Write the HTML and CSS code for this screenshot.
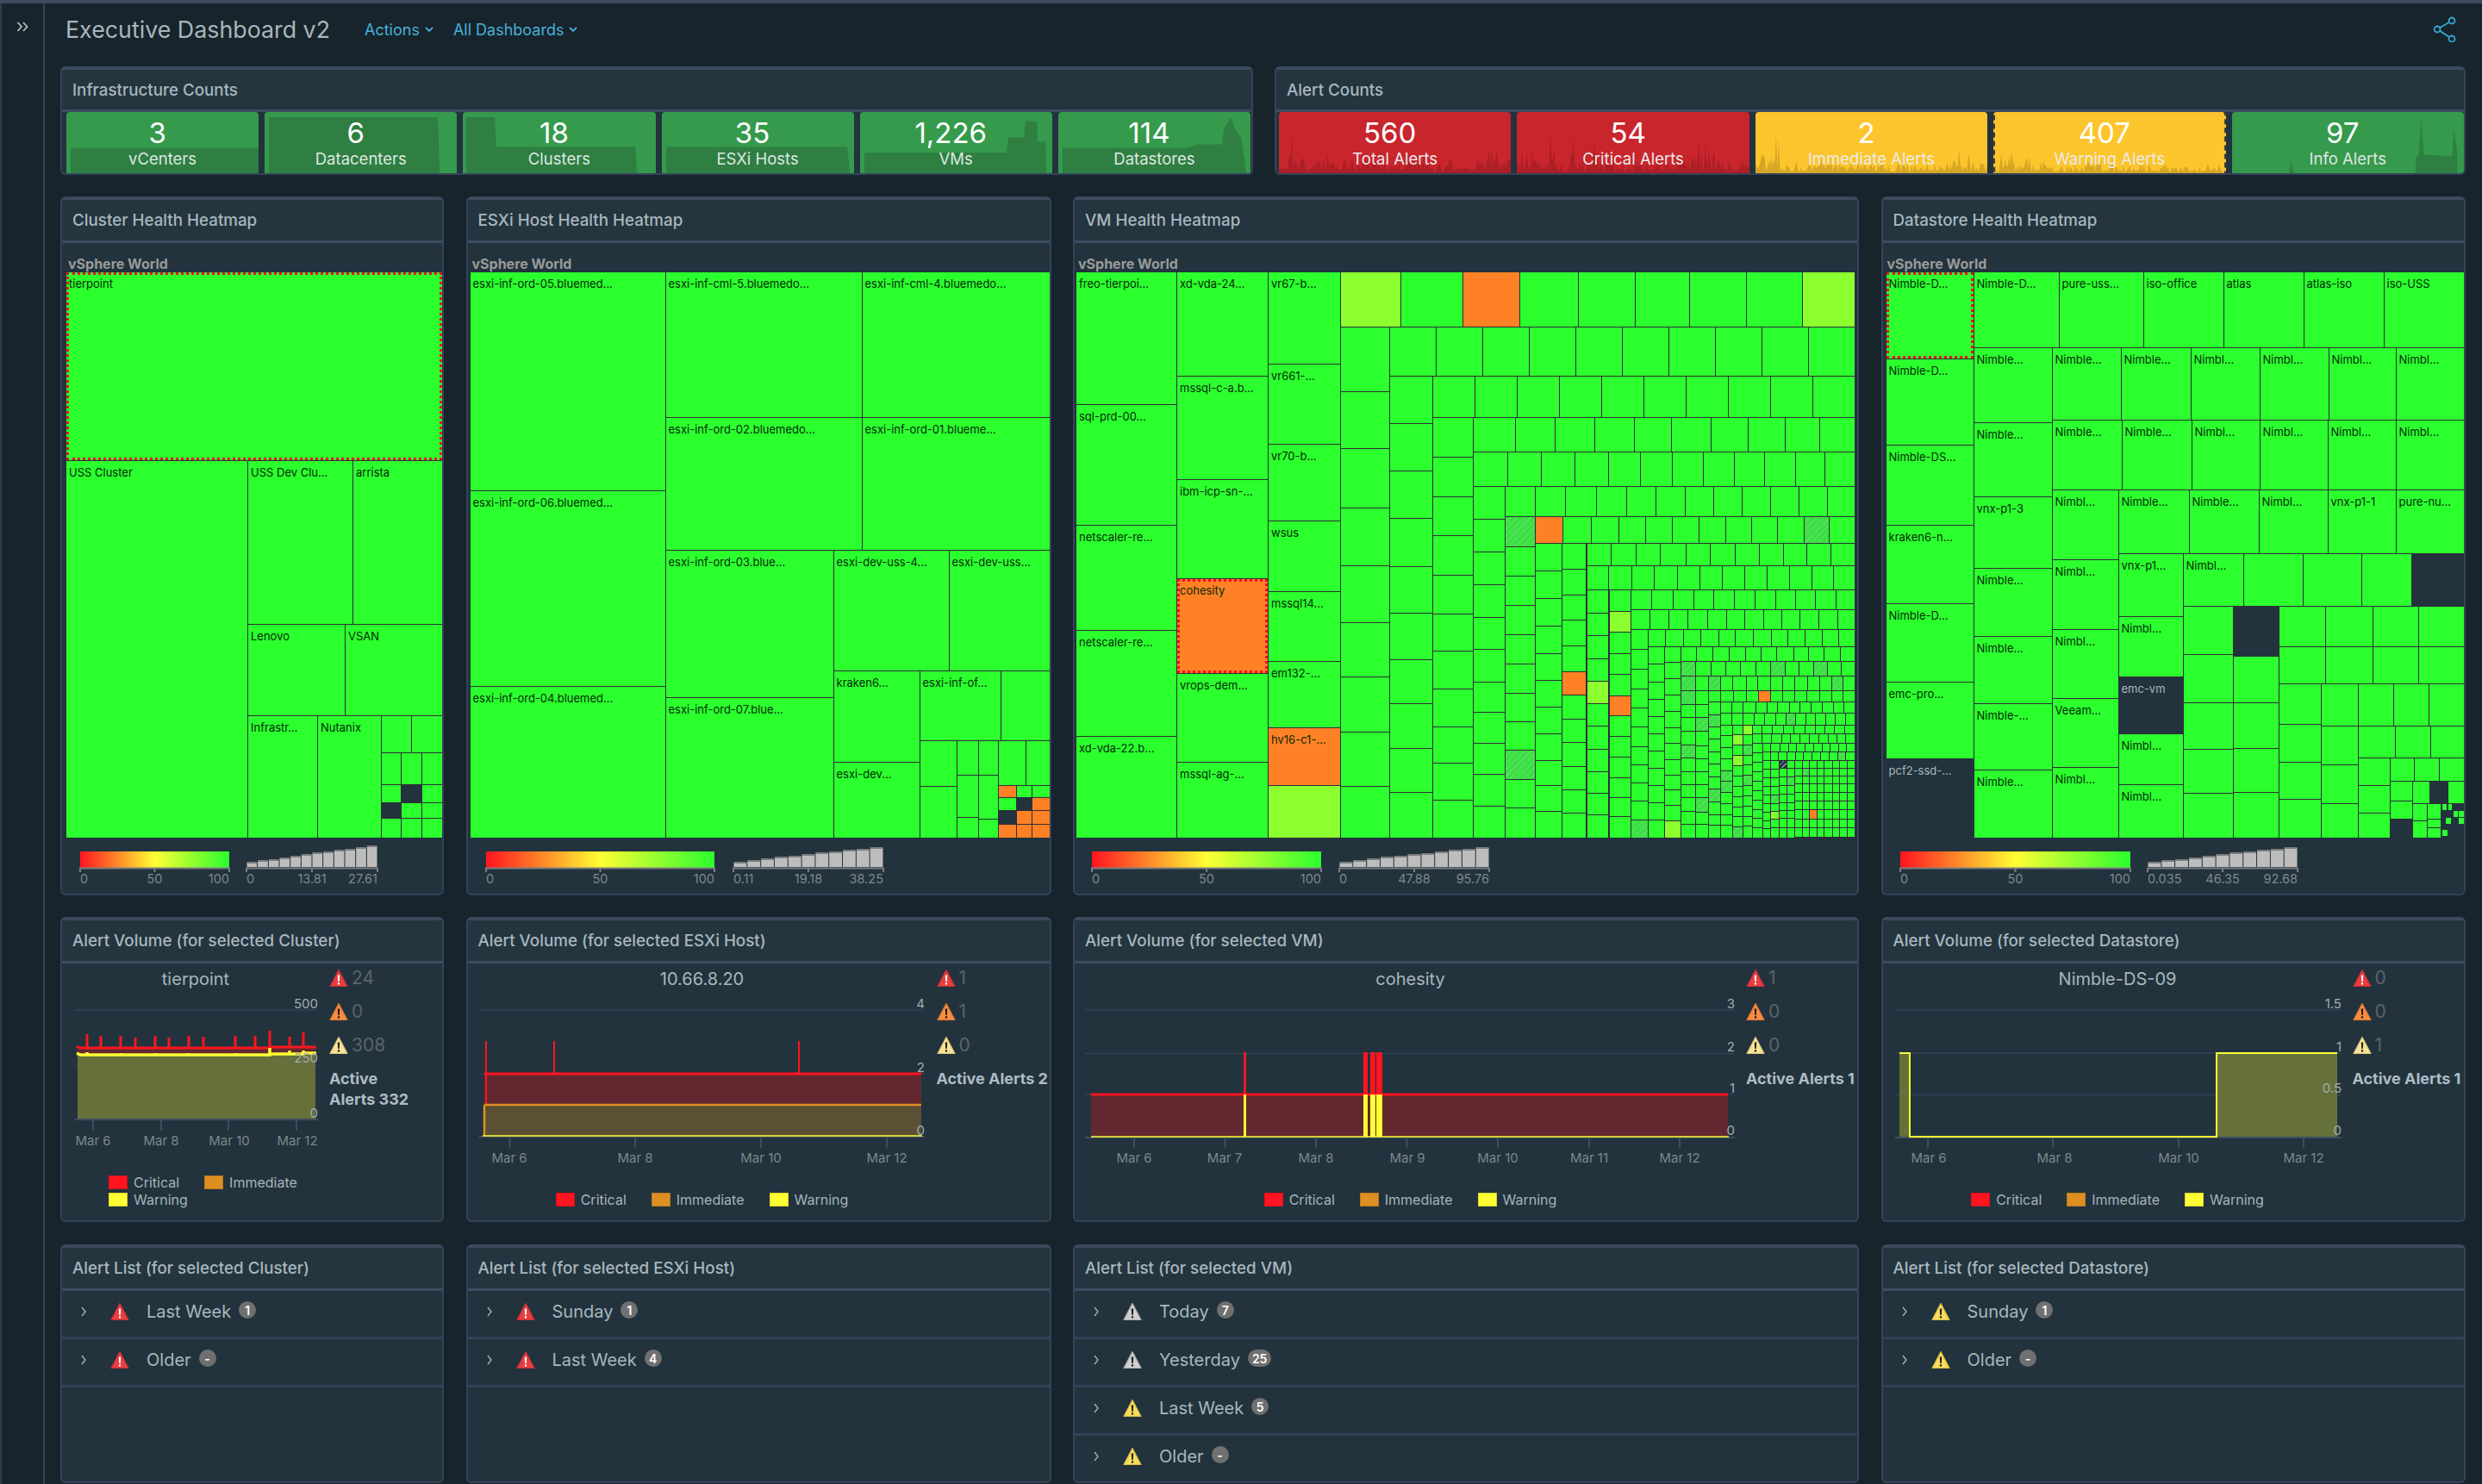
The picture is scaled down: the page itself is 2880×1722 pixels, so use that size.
FILE: index.html
```html
<!DOCTYPE html>
<html lang="en">
<head>
<meta charset="utf-8">
<title>Executive Dashboard v2</title>
<link rel="stylesheet" href="styles.css">
</head>
<body>
<svg class="defs" width="0" height="0">
  <defs>
    <linearGradient id="heat"><stop offset="0" stop-color="#ff1420"/><stop offset=".5" stop-color="#ffff33"/><stop offset="1" stop-color="#2bff2e"/></linearGradient>
    <symbol id="tri" viewBox="0 0 22 22">
      <path class="tri-body" d="M11 1.5 21 20.5H1Z"/>
      <path class="tri-mark" d="M9.8 7.5h2.4l-.4 7.5h-1.6zM9.9 16.2h2.2v2.4H9.9z"/>
    </symbol>
  </defs>
</svg>
<div class="app">
  <aside class="rail">
    <svg class="rail-icon" viewBox="0 0 14 12" width="14" height="12"><path d="M1.5 1 6 6l-4.500 5M8 1l4.500 5L8 11"/></svg>
  </aside>
  <main class="main">
    <header class="topbar">
      <h1 class="page-title">Executive Dashboard v2</h1>
      <a class="menu">Actions <svg class="caret" viewBox="0 0 10 6" width="10" height="6"><path d="M1 1l4 4 4-4"/></svg></a>
      <a class="menu">All Dashboards <svg class="caret" viewBox="0 0 10 6" width="10" height="6"><path d="M1 1l4 4 4-4"/></svg></a>
      <svg class="share" viewBox="0 0 28 30" width="28" height="30"><circle cx="22" cy="5" r="3.500"/><circle cx="5" cy="15" r="3.500"/><circle cx="22" cy="26" r="3.500"/><path d="M19 6.800 8 13.200M8 16.800 19 24"/></svg>
    </header>

    <section class="counts">
      <div class="panel panel-counts">
        <h2 class="panel-title">Infrastructure Counts</h2>
        <div class="tiles tiles-six">
          <div class="tile green"><svg class="spark" viewBox="0 0 223 72" preserveAspectRatio="none"><polygon points="5,42 223,42 223,72 5,72"/></svg><b>3</b><span>vCenters</span></div>
          <div class="tile green"><svg class="spark" viewBox="0 0 223 72" preserveAspectRatio="none"><polygon points="5,6 201,6 203,72 5,72"/></svg><b>6</b><span>Datacenters</span></div>
          <div class="tile green"><svg class="spark" viewBox="0 0 223 72" preserveAspectRatio="none"><polygon points="4,6 37,6 39,41 200,41 202,72 4,72"/></svg><b>18</b><span>Clusters</span></div>
          <div class="tile green"><svg class="spark" viewBox="0 0 223 72" preserveAspectRatio="none"><polygon points="5,41 215,41 218,72 5,72"/></svg><b>35</b><span>ESXi Hosts</span></div>
          <div class="tile green"><svg class="spark" viewBox="0 0 223 72" preserveAspectRatio="none"><polygon points="5,48 170,48 172,30 190,30 192,10 205,12 206,35 215,35 216,72 5,72"/></svg><b>1,226</b><span>VMs</span></div>
          <div class="tile green"><svg class="spark" viewBox="0 0 223 72" preserveAspectRatio="none"><polygon points="5,42 150,42 160,38 190,38 192,20 200,6 205,20 212,30 218,72 5,72"/></svg><b>114</b><span>Datastores</span></div>
        </div>
      </div>
      <div class="panel panel-counts">
        <h2 class="panel-title">Alert Counts</h2>
        <div class="tiles tiles-five">
          <div class="tile red" data-seed="3" data-base="16" data-peaks="15:50:12,30:46:8,55:32:10,250:36:25,270:28:14"><b>560</b><span>Total Alerts</span></div>
          <div class="tile red" data-seed="7" data-base="16" data-peaks="15:44:25,40:70:6,65:60:6,90:44:10,215:42:40"><b>54</b><span>Critical Alerts</span></div>
          <div class="tile amber" data-seed="11" data-base="12" data-peaks="25:64:6,43:66:5,10:34:20,80:24:30,240:32:30"><b>2</b><span>Immediate Alerts</span></div>
          <div class="tile amber chosen" data-seed="17" data-base="10" data-peaks="20:38:8,40:36:8,10:28:20,60:24:14,120:20:60"><b>407</b><span>Warning Alerts</span></div>
          <div class="tile green"><svg class="spark" viewBox="0 0 270 72" preserveAspectRatio="none"><polygon points="0,72 66,72 69,58 72,72 213,72 214,52 217,52 220,7 223,50 250,52 256,52 258,20 262,50 262,72"/></svg><b>97</b><span>Info Alerts</span></div>
        </div>
      </div>
    </section>

    <section class="board">
      <!-- heatmaps -->
      <div class="panel">
        <h2 class="panel-title">Cluster Health Heatmap</h2>
        <div class="heat heat-cluster">
          <div class="crumb">vSphere World</div>
          <div class="map" id="map-cluster"></div>
          <svg class="scale" data-scale="cluster" width="441" height="65" viewBox="72 972 441 65"></svg>
        </div>
      </div>
      <div class="panel">
        <h2 class="panel-title">ESXi Host Health Heatmap</h2>
        <div class="heat heat-esxi">
          <div class="crumb">vSphere World</div>
          <div class="map" id="map-esxi"></div>
          <svg class="scale" data-scale="esxi" width="675" height="65" viewBox="542 972 675 65"></svg>
        </div>
      </div>
      <div class="panel">
        <h2 class="panel-title">VM Health Heatmap</h2>
        <div class="heat heat-vm">
          <div class="crumb">vSphere World</div>
          <div class="map" id="map-vm"></div>
          <svg class="scale" data-scale="vm" width="908" height="65" viewBox="1247 972 908 65"></svg>
        </div>
      </div>
      <div class="panel">
        <h2 class="panel-title">Datastore Health Heatmap</h2>
        <div class="heat heat-ds">
          <div class="crumb">vSphere World</div>
          <div class="map" id="map-ds"></div>
          <svg class="scale" data-scale="ds" width="674" height="65" viewBox="2185 972 674 65"></svg>
        </div>
      </div>

      <!-- volume charts -->
      <div class="panel">
        <h2 class="panel-title">Alert Volume (for selected Cluster)</h2>
        <div class="volume vol-cluster">
          <div class="vol-chart">
            <div class="vol-name">tierpoint</div>
            <svg class="chart" width="310" height="197" viewBox="72 1148 310 197">
              <path class="grid" d="M87 1172H369M87 1237H369"/>
              <rect class="fill-red" x="90" y="1216" width="276" height="7"/>
              <rect class="fill-olive" x="90" y="1223" width="276" height="76"/>
              <path class="line-red" d="M89 1214l4 2H101V1200V1216H117V1202V1216H140V1202V1216H157V1204V1216H180V1202V1216H196V1204V1216H219V1202V1216H236V1203V1216H273V1202V1216H296V1202V1216H313V1196V1215H336V1203V1215H352V1198V1215H367"/>
              <path class="line-yellow" d="M89 1222l4 2H101V1221V1224H140V1222V1224H180V1222V1224H219V1222V1224H273V1222V1224H313V1216V1223H336V1219V1223H352V1219V1222H367"/>
              <path class="axis" d="M87 1299H369M108 1299v13M187 1299v13M265 1299v13M344 1299v13"/>
              <text class="val" x="369" y="1170" text-anchor="end">500</text>
              <text class="val" x="369" y="1233" text-anchor="end">250</text>
              <text class="val" x="369" y="1297" text-anchor="end">0</text>
              <text class="tick" x="108" y="1329" text-anchor="middle">Mar 6</text>
              <text class="tick" x="187" y="1329" text-anchor="middle">Mar 8</text>
              <text class="tick" x="266" y="1329" text-anchor="middle">Mar 10</text>
              <text class="tick" x="345" y="1329" text-anchor="middle">Mar 12</text>
            </svg>
            <div class="legend legend-wrap">
              <span class="key"><i class="sw sw-red"></i>Critical</span>
              <span class="key"><i class="sw sw-orange"></i>Immediate</span>
              <span class="key"><i class="sw sw-yellow"></i>Warning</span>
            </div>
          </div>
          <div class="vol-side">
            <div class="stat"><svg class="ic ic-red"><use href="#tri"/></svg><span>24</span></div>
            <div class="stat"><svg class="ic ic-orange"><use href="#tri"/></svg><span>0</span></div>
            <div class="stat"><svg class="ic ic-pale"><use href="#tri"/></svg><span>308</span></div>
            <div class="active">Active<br>Alerts 332</div>
          </div>
        </div>
      </div>
      <div class="panel">
        <h2 class="panel-title">Alert Volume (for selected ESXi Host)</h2>
        <div class="volume vol-esxi">
          <div class="vol-chart">
            <div class="vol-name">10.66.8.20</div>
            <svg class="chart" width="544" height="212" viewBox="542 1148 544 212">
              <path class="grid" d="M555 1172H1072M555 1246H1072"/>
              <rect class="fill-red" x="561" y="1246" width="507" height="36"/>
              <rect class="fill-brown" x="561" y="1282" width="507" height="37"/>
              <path class="line-thin-red" d="M563 1208V1282M642 1208V1246M926 1208V1246"/>
              <path class="line-red" d="M561 1246H1068"/>
              <path class="line-orange" d="M561 1282H1068M561 1282V1318"/>
              <path class="axis" d="M555 1319H1072M590.500 1319v13M736 1319v13M882 1319v13M1028 1319v13"/>
              <path class="line-thin-yellow" d="M559 1318H1069"/>
              <text class="val" x="1072" y="1170" text-anchor="end">4</text>
              <text class="val" x="1072" y="1244" text-anchor="end">2</text>
              <text class="val" x="1072" y="1317" text-anchor="end">0</text>
              <text class="tick" x="590" y="1349" text-anchor="middle">Mar 6</text>
              <text class="tick" x="736" y="1349" text-anchor="middle">Mar 8</text>
              <text class="tick" x="882" y="1349" text-anchor="middle">Mar 10</text>
              <text class="tick" x="1028" y="1349" text-anchor="middle">Mar 12</text>
            </svg>
            <div class="legend">
              <span class="key"><i class="sw sw-red"></i>Critical</span>
              <span class="key"><i class="sw sw-orange"></i>Immediate</span>
              <span class="key"><i class="sw sw-yellow"></i>Warning</span>
            </div>
          </div>
          <div class="vol-side">
            <div class="stat"><svg class="ic ic-red"><use href="#tri"/></svg><span>1</span></div>
            <div class="stat"><svg class="ic ic-orange"><use href="#tri"/></svg><span>1</span></div>
            <div class="stat"><svg class="ic ic-pale"><use href="#tri"/></svg><span>0</span></div>
            <div class="active">Active Alerts 2</div>
          </div>
        </div>
      </div>
      <div class="panel">
        <h2 class="panel-title">Alert Volume (for selected VM)</h2>
        <div class="volume vol-vm">
          <div class="vol-chart">
            <div class="vol-name">cohesity</div>
            <svg class="chart" width="779" height="212" viewBox="1247 1148 779 212">
              <path class="grid" d="M1259 1172H2013M1259 1222.500H2013M1259 1270H2013"/>
              <rect class="fill-red" x="1266" y="1270" width="739" height="49"/>
              <path class="line-red" d="M1266 1270H2005"/>
              <path class="bar-red" d="M1443 1221h3v49h-3zM1582 1221h5v49h-5zM1590 1221h6v49h-6zM1597 1221h7v49h-7z"/>
              <path class="bar-yellow" d="M1443 1270h3v49h-3zM1582 1270h5v49h-5zM1590 1270h6v49h-6zM1597 1270h7v49h-7z"/>
              <path class="axis" d="M1259 1320H2013M1316 1320v12M1421.500 1320v12M1527 1320v12M1632.500 1320v12M1738 1320v12M1844 1320v12M1949 1320v12"/>
              <path class="line-thin-yellow" d="M1266 1319H2006"/>
              <text class="val" x="2013" y="1170" text-anchor="end">3</text>
              <text class="val" x="2013" y="1220" text-anchor="end">2</text>
              <text class="val" x="2013" y="1268" text-anchor="end">1</text>
              <text class="val" x="2013" y="1317" text-anchor="end">0</text>
              <text class="tick" x="1316" y="1349" text-anchor="middle">Mar 6</text>
              <text class="tick" x="1421" y="1349" text-anchor="middle">Mar 7</text>
              <text class="tick" x="1527" y="1349" text-anchor="middle">Mar 8</text>
              <text class="tick" x="1633" y="1349" text-anchor="middle">Mar 9</text>
              <text class="tick" x="1738" y="1349" text-anchor="middle">Mar 10</text>
              <text class="tick" x="1844" y="1349" text-anchor="middle">Mar 11</text>
              <text class="tick" x="1949" y="1349" text-anchor="middle">Mar 12</text>
            </svg>
            <div class="legend">
              <span class="key"><i class="sw sw-red"></i>Critical</span>
              <span class="key"><i class="sw sw-orange"></i>Immediate</span>
              <span class="key"><i class="sw sw-yellow"></i>Warning</span>
            </div>
          </div>
          <div class="vol-side">
            <div class="stat"><svg class="ic ic-red"><use href="#tri"/></svg><span>1</span></div>
            <div class="stat"><svg class="ic ic-orange"><use href="#tri"/></svg><span>0</span></div>
            <div class="stat"><svg class="ic ic-pale"><use href="#tri"/></svg><span>0</span></div>
            <div class="active">Active Alerts 1</div>
          </div>
        </div>
      </div>
      <div class="panel">
        <h2 class="panel-title">Alert Volume (for selected Datastore)</h2>
        <div class="volume vol-ds">
          <div class="vol-chart">
            <div class="vol-name">Nimble-DS-09</div>
            <svg class="chart" width="545" height="212" viewBox="2185 1148 545 212">
              <path class="grid" d="M2199 1172H2717M2199 1222H2717M2199 1270.500H2717"/>
              <path class="fill-olive" d="M2204 1222h12v97h-12zM2572 1222h140v97h-140z"/>
              <path class="axis" d="M2199 1320H2717M2237 1320v12M2382 1320v12M2528 1320v12M2673 1320v12"/>
              <path class="line-yellow-mid" d="M2204 1222H2216V1319H2572V1222H2712"/>
              <text class="val" x="2717" y="1170" text-anchor="end">1.5</text>
              <text class="val" x="2717" y="1220" text-anchor="end">1</text>
              <text class="val" x="2717" y="1268" text-anchor="end">0.5</text>
              <text class="val" x="2717" y="1317" text-anchor="end">0</text>
              <text class="tick" x="2238" y="1349" text-anchor="middle">Mar 6</text>
              <text class="tick" x="2384" y="1349" text-anchor="middle">Mar 8</text>
              <text class="tick" x="2528" y="1349" text-anchor="middle">Mar 10</text>
              <text class="tick" x="2673" y="1349" text-anchor="middle">Mar 12</text>
            </svg>
            <div class="legend">
              <span class="key"><i class="sw sw-red"></i>Critical</span>
              <span class="key"><i class="sw sw-orange"></i>Immediate</span>
              <span class="key"><i class="sw sw-yellow"></i>Warning</span>
            </div>
          </div>
          <div class="vol-side">
            <div class="stat"><svg class="ic ic-red"><use href="#tri"/></svg><span>0</span></div>
            <div class="stat"><svg class="ic ic-orange"><use href="#tri"/></svg><span>0</span></div>
            <div class="stat"><svg class="ic ic-pale"><use href="#tri"/></svg><span>1</span></div>
            <div class="active">Active Alerts 1</div>
          </div>
        </div>
      </div>

      <!-- alert lists -->
      <div class="panel">
        <h2 class="panel-title">Alert List (for selected Cluster)</h2>
        <ul class="alerts">
          <li class="alert"><svg class="chev" viewBox="0 0 6 12"><path d="M1 1l4 5-4 5"/></svg><svg class="ic ic-red"><use href="#tri"/></svg><span class="alert-name">Last Week</span><span class="badge">1</span></li>
          <li class="alert"><svg class="chev" viewBox="0 0 6 12"><path d="M1 1l4 5-4 5"/></svg><svg class="ic ic-red"><use href="#tri"/></svg><span class="alert-name">Older</span><span class="badge">-</span></li>
        </ul>
      </div>
      <div class="panel">
        <h2 class="panel-title">Alert List (for selected ESXi Host)</h2>
        <ul class="alerts">
          <li class="alert"><svg class="chev" viewBox="0 0 6 12"><path d="M1 1l4 5-4 5"/></svg><svg class="ic ic-red"><use href="#tri"/></svg><span class="alert-name">Sunday</span><span class="badge">1</span></li>
          <li class="alert"><svg class="chev" viewBox="0 0 6 12"><path d="M1 1l4 5-4 5"/></svg><svg class="ic ic-red"><use href="#tri"/></svg><span class="alert-name">Last Week</span><span class="badge">4</span></li>
        </ul>
      </div>
      <div class="panel">
        <h2 class="panel-title">Alert List (for selected VM)</h2>
        <ul class="alerts">
          <li class="alert"><svg class="chev" viewBox="0 0 6 12"><path d="M1 1l4 5-4 5"/></svg><svg class="ic ic-grey"><use href="#tri"/></svg><span class="alert-name">Today</span><span class="badge">7</span></li>
          <li class="alert"><svg class="chev" viewBox="0 0 6 12"><path d="M1 1l4 5-4 5"/></svg><svg class="ic ic-grey"><use href="#tri"/></svg><span class="alert-name">Yesterday</span><span class="badge">25</span></li>
          <li class="alert"><svg class="chev" viewBox="0 0 6 12"><path d="M1 1l4 5-4 5"/></svg><svg class="ic ic-yellow"><use href="#tri"/></svg><span class="alert-name">Last Week</span><span class="badge">5</span></li>
          <li class="alert"><svg class="chev" viewBox="0 0 6 12"><path d="M1 1l4 5-4 5"/></svg><svg class="ic ic-yellow"><use href="#tri"/></svg><span class="alert-name">Older</span><span class="badge">-</span></li>
        </ul>
      </div>
      <div class="panel">
        <h2 class="panel-title">Alert List (for selected Datastore)</h2>
        <ul class="alerts">
          <li class="alert"><svg class="chev" viewBox="0 0 6 12"><path d="M1 1l4 5-4 5"/></svg><svg class="ic ic-yellow"><use href="#tri"/></svg><span class="alert-name">Sunday</span><span class="badge">1</span></li>
          <li class="alert"><svg class="chev" viewBox="0 0 6 12"><path d="M1 1l4 5-4 5"/></svg><svg class="ic ic-yellow"><use href="#tri"/></svg><span class="alert-name">Older</span><span class="badge">-</span></li>
        </ul>
      </div>
    </section>
  </main>
</div>
<script src="app.js"></script>
</body>
</html>
```
FILE: styles.css
```css
* { box-sizing: border-box; }
html, body { margin: 0; padding: 0; }
body {
  width: 2880px; height: 1722px; overflow: hidden;
  background: #17242b;
  border-top: 4px solid #3d4a60;
  font-family: Inter, "Noto Sans", sans-serif;
  color: #a8b7be;
}
.defs { position: absolute; }
.app { display: flex; height: 1718px; }
.rail {
  width: 52px; flex: none;
  border-left: 2px solid #2e3b4a; border-right: 2px solid #3a4656;
  display: flex; justify-content: center; padding-top: 21px;
}
.rail-icon { fill: none; stroke: #b3bdc3; stroke-width: 1.800; }
.main { flex: 1; min-width: 0; padding-left: 18px; }

.topbar { display: flex; align-items: center; height: 60px; margin-bottom: 13px; padding-right: 29px; }
.page-title { margin: 0 40px 0 6px; font-size: 26.800px; font-weight: 400; color: #a7b6bd; white-space: nowrap; }
.menu { display: flex; align-items: center; gap: 6px; margin-right: 23px; font-size: 18px; color: #49afd9; white-space: nowrap; }
.caret { fill: none; stroke: #49afd9; stroke-width: 1.800; }
.share { margin-left: auto; fill: none; stroke: #39a8d8; stroke-width: 1.800; }

.counts { display: grid; grid-template-columns: 1384px 1382px; column-gap: 25px; margin-bottom: 25px; }
.board { display: grid; grid-template-columns: 445px 679px 912px 678px; grid-template-rows: 811px 354px 278px; column-gap: 25.500px; row-gap: 25px; }
.board > .panel:nth-child(n+9) { margin-top: 1px; }

.panel {
  background: #22333d;
  border: 2px solid #34435a;
  border-top: 4px solid #3b4a5f;
  border-radius: 6px;
  overflow: hidden;
  min-width: 0;
}
.panel-counts { height: 126px; }
.panel-counts .panel-title { height: 49px; }
.panel-title {
  margin: 0; height: 50px; padding: 0 0 0 12px;
  display: flex; align-items: center;
  background: #24353f;
  border-bottom: 3px solid #3e4c60;
  font-size: 18.800px; font-weight: 500; color: #a8b7be; white-space: nowrap;
}

/* count tiles */
.tiles { display: grid; column-gap: 7px; height: 71px; }
.tiles-six { grid-template-columns: repeat(6, 1fr); padding: 0 1px 0 5px; }
.tiles-five { grid-template-columns: repeat(5, 1fr); padding: 0 0 0 3px; }
.tile {
  position: relative; overflow: hidden;
  display: flex; flex-direction: column; align-items: center;
  border-radius: 4px 4px 0 0;
  padding-top: 4px;
  color: #fff;
}
.tile b { position: relative; font-size: 33px; line-height: 40px; font-weight: 400; padding-right: 12px; }
.tile span { position: relative; font-size: 18.500px; line-height: 22px; margin-top: -1px; color: #ececec; }
.tile.green span { color: #dfe7e2; }
.green { background: #359a4c; }
.red { background: #c9252d; }
.amber { background: #fcc52d; }
.spark { position: absolute; inset: 0; width: 100%; height: 100%; }
.green .spark { fill: #2e7f41; }
.red .spark { fill: #ab1f27; }
.amber .spark { fill: #d6a627; }
.chosen { border-left: 2px dashed #3c3c3c; border-right: 2px dashed #3c3c3c; }

/* heatmaps */
.heat { padding-top: 14px; }
.crumb {
  height: 20px; line-height: 18px;
  border-top: 1px solid #2b3038;
  padding-left: 2px;
  font-size: 16px; font-weight: 700; color: #9a9a9a; white-space: nowrap;
}
.heat-cluster .crumb { padding-left: 7px; }
.heat-esxi .crumb { padding-left: 5px; }
.heat-vm .crumb { padding-left: 4px; }
.heat-ds .crumb { padding-left: 5px; }
.map { position: relative; height: 656px; background: #2f2d38; overflow: hidden; }
.heat-cluster .map { width: 436px; margin-left: 5px; }
.heat-esxi .map { width: 672px; margin-left: 3px; }
.heat-vm .map { width: 903px; margin-left: 2px; }
.heat-ds .map { width: 670px; margin-left: 4px; }
.cell {
  position: absolute; overflow: hidden;
  background: #2bff2e; color: #062a08;
  font-size: 13px; line-height: 18px;
  padding: 4px 0 0 3px; white-space: nowrap;
}
.cell.orange { background: #ff8125; }
.cell.lime { background: #8cff2f; }
.cell.empty { background: #22333d; color: #a8b7be; }
.cell.hatch { background: repeating-linear-gradient(135deg, #35e43c 0 4px, #62d76c 4px 5.500px); }
.cell.hatch-dark { background: repeating-linear-gradient(135deg, #22333d 0 3px, #8fa3a8 3px 4px); }
.cell.sel { outline: 3px dotted #ff0b24; outline-offset: -3px; }
.scale { display: block; }
.scale text { font-size: 14.500px; fill: #7f888c; }
.scale-axis { fill: none; stroke: #7a7d80; stroke-width: 2; }
.scale-bar { fill: #bdbdbd; }
.scale-cap { fill: #7d7d7d; }

/* volume charts */
.volume { display: grid; }
.vol-cluster { grid-template-columns: 310px 1fr; }
.vol-esxi { grid-template-columns: 544px 1fr; }
.vol-vm { grid-template-columns: 779px 1fr; }
.vol-ds { grid-template-columns: 545px 1fr; }
.vol-chart { min-width: 0; }
.vol-name { padding-top: 6px; height: 30px; line-height: 24px; text-align: center; font-size: 20px; color: #a8b7be; }
.chart { display: block; }
.grid { fill: none; stroke: #33415a; stroke-width: 1.500; }
.axis { fill: none; stroke: #3f4d60; stroke-width: 2; }
.fill-red { fill: #63282f; }
.fill-olive { fill: #66703a; }
.fill-brown { fill: #5b4f34; }
.line-red { fill: none; stroke: #ff1420; stroke-width: 3; }
.line-thin-red { fill: none; stroke: #ff1420; stroke-width: 2; }
.line-orange { fill: none; stroke: #dd8f22; stroke-width: 2.500; }
.line-yellow { fill: none; stroke: #ffff33; stroke-width: 3.500; }
.line-yellow-mid { fill: none; stroke: #ffff33; stroke-width: 2; }
.line-thin-yellow { fill: none; stroke: #ffff33; stroke-width: 1.500; }
.bar-red { fill: #ff1420; }
.bar-yellow { fill: #ffff33; }
.val { font-size: 15px; fill: #a3adb2; }
.tick { font-size: 15px; fill: #7b888c; }
.legend { display: flex; justify-content: center; flex-wrap: wrap; column-gap: 29px; row-gap: 4px; margin-top: 24px; font-size: 16px; color: #a6b3ba; }
.legend-wrap { justify-content: flex-start; margin-top: 19px; padding-left: 54px; }
.key { display: flex; align-items: center; height: 16px; white-space: nowrap; }
.sw { width: 22px; height: 16px; margin-right: 7px; border: 1px solid rgba(0,0,0,.15); }
.sw-red { background: #ff1420; }
.sw-orange { background: #dd8f22; }
.sw-yellow { background: #ffff33; }
.vol-side { padding-top: 6px; display: flex; flex-direction: column; row-gap: 18px; }
.stat { display: flex; align-items: center; height: 21px; column-gap: 4px; font-size: 21px; color: #5c6368; }
.active { margin-top: -1px; font-size: 18px; line-height: 24px; font-weight: 700; color: #aebcc3; white-space: nowrap; }

/* warning glyph */
.ic { width: 22px; height: 22px; flex: none; }
.tri-body { fill: var(--tri); stroke: var(--edge); stroke-width: 1.200; stroke-linejoin: round; }
.tri-mark { fill: var(--mark); }
.ic-red { --tri: #e63f42; --edge: #c92f33; --mark: #fff; }
.ic-orange { --tri: #f78c43; --edge: #dd7a35; --mark: #20160c; }
.ic-pale { --tri: #f6e39a; --edge: #d9c47a; --mark: #20200c; }
.ic-grey { --tri: #cfcfcf; --edge: #b0b0b0; --mark: #1b1b1b; }
.ic-yellow { --tri: #f7dc5e; --edge: #d7bb44; --mark: #20200c; }

/* alert list */
.alerts { list-style: none; margin: 0; padding: 0; }
.alert {
  display: flex; align-items: center;
  height: 56px; padding: 0 0 5px 22px;
  border-bottom: 3px solid #33415a;
}
.chev { width: 6px; height: 12px; margin-right: 28px; flex: none; fill: none; stroke: #a8b7be; stroke-width: 1.300; }
.alert-name { margin-left: 20px; font-size: 20px; color: #a8b7be; }
.badge {
  margin-left: 9px; min-width: 20px; height: 20px; padding: 0 5px;
  display: flex; align-items: center; justify-content: center;
  background: #707070; border-radius: 10px;
  font-size: 14px; font-weight: 600; color: #fff;
  position: relative; top: -2px;
}
```
FILE: app.js
```js
// Treemap cells, alert sparklines and colour-scale legends, laid out from data.
var FLAGS = { o: 'orange', y: 'lime', h: 'hatch', d: 'empty', x: 'hatch-dark', s: 'sel', c: 'orange sel' };

function parse(e) {
  if (typeof e === 'number') return { f: '', n: e };
  return { f: e[0], n: +e.slice(1) };
}

function treemap(id, ox, oy) {
  var el = document.getElementById(id);
  var api = {
    rect: function (x0, y0, x1, y1, f, label) {
      var d = document.createElement('div');
      d.className = 'cell ' + (FLAGS[f] || '');
      d.style.left = Math.round(x0 - ox) + 'px';
      d.style.top = Math.round(y0 - oy) + 'px';
      d.style.width = Math.round(x1) - Math.round(x0) - 1 + 'px';
      d.style.height = Math.round(y1) - Math.round(y0) - 1 + 'px';
      if (label) d.textContent = label;
      el.appendChild(d);
    },
    row: function (y0, y1, x0, ends, labels) {
      var x = x0;
      ends.forEach(function (e, i) {
        var p = parse(e);
        api.rect(x, y0, p.n, y1, p.f, labels && labels[i]);
        x = p.n;
      });
    },
    col: function (x0, x1, y0, ends, labels) {
      var y = y0;
      ends.forEach(function (e, i) {
        var p = parse(e);
        api.rect(x0, y, x1, p.n, p.f, labels && labels[i]);
        y = p.n;
      });
    },
    even: function (x0, x1, n) {
      var out = [];
      for (var i = 1; i <= n; i++) out.push(x0 + (x1 - x0) * i / n);
      return out;
    },
    // Same as row/col but in the coordinates of a 3x detail grid of the dense corner.
    zr: function (y0, y1, x0, ends) {
      api.row(600 + y0 / 3, 600 + y1 / 3, 1800 + x0 / 3, ends.map(function (e) {
        var p = parse(e);
        return (p.f || 'n') + (p.n >= 1060 ? 2153 : 1800 + p.n / 3);
      }));
    },
    zc: function (x0, x1, y0, ends) {
      api.col(1800 + x0 / 3, 1800 + x1 / 3, 600 + y0 / 3, ends.map(function (e) {
        var p = parse(e);
        return (p.f || 'n') + (p.n >= 1116 ? 973 : 600 + p.n / 3);
      }));
    }
  };
  return api;
}

/* ---- cluster ---- */
(function () {
  var m = treemap('map-cluster', 77, 316);
  m.rect(77, 316, 514, 535, 's', 'tierpoint');
  m.rect(77, 535, 288, 973, '', 'USS Cluster');
  m.rect(288, 535, 410, 725, '', 'USS Dev Clu...');
  m.rect(410, 535, 514, 725, '', 'arrista');
  m.rect(288, 725, 401, 831, '', 'Lenovo');
  m.rect(401, 725, 514, 831, '', 'VSAN');
  m.rect(288, 831, 369, 973, '', 'Infrastr...');
  m.rect(369, 831, 443, 973, '', 'Nutanix');
  m.row(831, 874, 443, [478, 514]);
  m.row(874, 911, 443, [466, 490, 514]);
  m.row(911, 932, 443, [466, 'd490', 514]);
  m.row(932, 950, 443, ['d466', 490, 514]);
  m.row(950, 973, 443, [466, 490, 514]);
})();

/* ---- esxi ---- */
(function () {
  var m = treemap('map-esxi', 545, 316);
  m.col(545, 772, 316, [570, 797, 973], ['esxi-inf-ord-05.bluemed...', 'esxi-inf-ord-06.bluemed...', 'esxi-inf-ord-04.bluemed...']);
  m.row(316, 485, 772, [1000, 1218], ['esxi-inf-cml-5.bluemedo...', 'esxi-inf-cml-4.bluemedo...']);
  m.row(485, 639, 772, [1000, 1218], ['esxi-inf-ord-02.bluemedo...', 'esxi-inf-ord-01.blueme...']);
  m.col(772, 967, 639, [810, 973], ['esxi-inf-ord-03.blue...', 'esxi-inf-ord-07.blue...']);
  m.row(639, 779, 967, [1101, 1218], ['esxi-dev-uss-4...', 'esxi-dev-uss...']);
  m.col(967, 1067, 779, [885, 973], ['kraken6...', 'esxi-dev...']);
  m.row(779, 860, 1067, [1161, 1218], ['esxi-inf-of...']);
  m.col(1067, 1110, 860, [913, 973]);
  m.col(1110, 1135, 860, [900, 949, 973]);
  m.col(1135, 1158, 860, [900, 951, 973]);
  m.row(860, 912, 1158, [1190, 1218]);
  m.row(912, 926, 1158, ['o1179', 1197, 1218]);
  m.row(926, 941, 1158, [1179, 'd1197', 'o1218']);
  m.row(941, 957, 1158, ['d1179', 'o1197', 'o1218']);
  m.row(957, 973, 1158, ['o1179', 'o1197', 'o1218']);
})();

/* ---- vm ---- */
(function () {
  var m = treemap('map-vm', 1249, 316);
  m.col(1249, 1366, 316, [470, 610, 732, 855, 973], ['freo-tierpoi...', 'sql-prd-00...', 'netscaler-re...', 'netscaler-re...', 'xd-vda-22.b...']);
  m.col(1366, 1472, 316, [437, 557, 672, 'c782', 885, 973], ['xd-vda-24...', 'mssql-c-a.b...', 'ibm-icp-sn-...', 'cohesity', 'vrops-dem...', 'mssql-ag-...']);
  m.col(1472, 1556, 316, [423, 516, 605, 687, 768, 845, 'o912', 'y973'], ['vr67-b...', 'vr661-...', 'vr70-b...', 'wsus', 'mssql14...', 'em132-...', 'hv16-c1-...']);
  m.row(316, 380, 1556, ['y1626', 1698, 'o1764', 1832, 1898, 1961, 2027, 2092, 'y2153']);
  m.col(1556, 1613, 380, [455, 521, 590, 657, 723, 786, 850, 913, 973]);
  m.row(380, 437, 1613, m.even(1613, 2153, 10));
  m.col(1613, 1663, 437, [492, 547, 602, 658, 712, 766, 817, 869, 920, 973]);
  m.row(437, 485, 1663, m.even(1663, 2153, 10));
  m.col(1663, 1710, 485, [531, 577, 622, 668, 713, 756, 800, 844, 886, 929, 973]);
  m.row(485, 525, 1710, [1759, 1805, 1851, 1897, 1940, 1986, 2029, 2072, 2112, 2153]);
  m.row(525, 565, 1710, [1750, 1789, 1828, 1867, 1904, 1941, 1977, 2013, 2048, 2084, 2118, 2153]);
  m.col(1710, 1747, 565, [603, 641, 679, 717, 754, 792, 827, 863, 899, 936, 973]);
  m.col(1747, 1782, 565, [600, 'h635', 669, 703, 737, 771, 805, 838, 871, 'h905', 938, 973]);
  m.row(565, 600, 1782, [1817, 1853, 1888, 1922, 1956, 1989, 2022, 2055, 2088, 2121, 2153]);
  m.row(600, 631, 1782, ['o1814', 1847, 1879, 1910, 1941, 1972, 2003, 2033, 2063, 2094, 'h2123', 2153]);
  m.col(1782, 1813, 631, [663, 695, 727, 759, 790, 821, 852, 883, 912, 942, 973]);
  m.col(1813, 1841, 631, [661, 691, 720, 750, 780, 'o807', 835, 862, 890, 917, 944, 973]);

  m.zr(94, 172, 125, [210, 297, 382, 470, 556, 642, 726, 810, 892, 976, 1060]);
  m.zr(172, 255, 125, [202, 283, 361, 441, 520, 598, 676, 754, 832, 908, 985, 1060]);
  m.zc(125, 202, 255, [335, 415, 495, 573, 'y652', 730, 810, 887, 962, 1037, 1116]);
  m.zc(203, 278, 255, [330, 'y403', 477, 550, 625, 'o693', 765, 838, 908, 978, 1045, 1116]);
  m.zr(255, 325, 278, [350, 425, 497, 568, 640, 712, 783, 853, 922, 992, 1060]);
  m.zr(325, 393, 278, [345, 412, 478, 546, 612, 676, 742, 805, 868, 933, 998, 1060]);
  m.zc(278, 340, 393, [463, 532, 600, 667, 733, 800, 865, 928, 990, 1055, 'h1116']);
  m.zr(393, 452, 340, [400, 462, 522, 584, 643, 705, 767, 825, 884, 944, 1002, 1060]);
  m.zc(340, 395, 452, [512, 575, 635, 695, 755, 815, 877, 937, 997, 1055, 1116]);
  m.zc(395, 452, 452, [508, 565, 622, 678, 735, 790, 845, 900, 950, 1005, 1060, 'y1116']);
  m.zr(452, 505, 452, [507, 565, 622, 677, 733, 787, 845, 898, 952, 1007, 1060]);
  m.zr(505, 555, 452, ['h503', 558, 610, 661, 713, 765, 'h815', 865, 915, 'h962', 1012, 1060]);
  m.zc(452, 503, 555, ['h605', 'h653', 700, 748, 795, 'h840', 888, 932, 978, 1025, 1070, 1116]);
  m.zc(503, 550, 555, [605, 653, 700, 'h748', 797, 842, 888, 932, 978, 'h1028', 1070, 1116]);
  m.zr(555, 605, 550, ['h590', 633, 680, 720, 765, 808, 850, 893, 935, 977, 'h1017', 1060]);
  m.zr(605, 645, 550, [592, 635, 680, 722, 'o765', 808, 850, 892, 935, 977, 1018, 1060]);
  m.zc(550, 590, 645, [690, 'h733', 775, 818, 862, 905, 948, 'h992', 1037, 1075, 1116]);
  m.zr(645, 685, 590, [630, 670, 713, 752, 790, 830, 868, 907, 945, 983, 1020, 1060]);
  m.zr(685, 725, 590, [630, 668, 707, 745, 782, 818, 'h853', 888, 920, 957, 990, 1025, 1060]);
  m.zc(590, 632, 725, [763, 803, 843, 885, 'h922', 'h960', 998, 1037, 1075, 1116]);
  m.zc(632, 668, 725, [760, 'y795', 832, 'y867', 903, 940, 975, 1010, 1045, 1080, 'h1116']);
  m.zc(668, 702, 725, ['y760', 795, 'h832', 865, 900, 'h937', 973, 1008, 1043, 1078, 1116]);
  m.zr(725, 757, 702, [735, 772, 810, 846, 885, 920, 953, 988, 1022, 1060]);
  m.zr(757, 788, 702, [735, 768, 803, 835, 868, 900, 933, 965, 997, 1027, 1060]);
  m.zc(702, 737, 788, [822, 855, 888, 920, 955, 988, 1020, 1050, 1083, 1116]);
  m.zr(788, 820, 737, [765, 797, 827, 855, 885, 915, 945, 973, 1003, 1030, 1060]);
  m.zr(820, 848, 737, [765, 793, 822, 852, 880, 910, 940, 970, 1000, 'h1027', 1060]);
  m.zc(737, 765, 848, [880, 910, 940, 970, 1000, 1028, 1058, 1085, 1116]);
  m.zc(765, 795, 848, [880, 908, 938, 968, 'h998', 1025, 'y1053', 1083, 1116]);
  m.zc(795, 822, 848, ['x877', 905, 935, 965, 995, 1023, 1050, 1083, 1116]);
  m.zc(822, 848, 848, [877, 905, 'h935', 965, 995, 1023, 1050, 1083, 1116]);
  var ys = [848, 875, 902, 930, 960, 990, 1020, 1052, 1083, 1116];
  var xs = [875, 900, 928, 952, 980, 1005, 1033, 1060];
  ys.slice(1).forEach(function (y, i) {
    m.zr(ys[i], y, 848, xs);
  });
  m.zr(875, 902, 875, ['h900']);
  m.zr(1020, 1052, 900, ['o928']);
})();

/* ---- datastore ---- */
(function () {
  var m = treemap('map-ds', 2189, 316);
  var N = 'Nimble...', B = 'Nimbl...';
  m.col(2189, 2291, 316, ['s417', 517, 610, 701, 792, 881, 'd973'], ['Nimble-D...', 'Nimble-D...', 'Nimble-DS...', 'kraken6-n...', 'Nimble-D...', 'emc-pro...', 'pcf2-ssd-...']);
  m.row(316, 404, 2291, [2390, 2488, 2581, 2674, 2767, 2860], ['Nimble-D...', 'pure-uss...', 'iso-office', 'atlas', 'atlas-iso', 'iso-USS']);
  m.col(2291, 2382, 404, [491, 577, 660, 739, 817, 894, 973], [N, N, 'vnx-p1-3', N, N, 'Nimble-...', N]);
  m.row(404, 488, 2382, [2462, 2543, 2623, 2703, 2781, 2860], [N, N, B, B, B, B]);
  m.row(488, 569, 2382, [2463, 2544, 2623, 2702, 2781, 2860], [N, N, B, B, B, B]);
  m.col(2382, 2459, 569, [650, 731, 811, 891, 973], [B, B, B, 'Veeam...', B]);
  m.row(569, 643, 2459, [2541, 2622, 2702, 2781, 2860], [N, N, B, 'vnx-p1-1', 'pure-nu...']);
  m.col(2459, 2534, 643, [716, 786, 'd852', 911, 973], ['vnx-p1...', B, 'emc-vm', B, B]);
  m.row(643, 704, 2534, [2604, 2673, 2741, 2799, 'd2860'], [B]);
  m.col(2534, 2592, 704, [760, 816, 870, 921, 973]);
  m.col(2592, 2645, 704, ['d762', 816, 869, 920, 973]);
  m.row(704, 751, 2645, [2699, 2754, 2807, 2860]);
  m.row(751, 794, 2645, [2699, 2754, 2807, 2860]);
  m.col(2645, 2694, 794, [841, 885, 928, 973]);
  m.col(2694, 2737, 794, [843, 888, 933, 973]);
  m.row(794, 843, 2737, [2778, 2819, 2860]);
  m.row(843, 880, 2737, [2780, 2821, 2860]);
  m.col(2737, 2774, 880, [912, 944, 973]);
  m.row(880, 907, 2774, [2802, 2831, 2860]);
  m.rect(2774, 907, 2800, 930);
  m.rect(2800, 907, 2820, 933);
  m.rect(2820, 907, 2841, 933, 'd');
  m.rect(2841, 907, 2860, 933);
  m.rect(2774, 930, 2800, 951);
  m.rect(2774, 951, 2800, 973, 'd');
  m.rect(2800, 933, 2817, 953);
  m.rect(2800, 953, 2817, 973);
  m.col(2817, 2833, 933, [951, 961, 973]);
  m.rect(2833, 933, 2860, 973, 'd');
  [[2834, 933, 2840, 941], [2841, 933, 2846, 941], [2847, 941, 2853, 949], [2853, 941, 2860, 949], [2838, 949, 2845, 957], [2853, 949, 2860, 957], [2834, 963, 2841, 971]].forEach(function (r) {
    m.rect(r[0], r[1], r[2], r[3]);
  });
})();

/* ---- alert-count sparklines ---- */
document.querySelectorAll('.tile[data-seed]').forEach(function (tile) {
  var s = +tile.dataset.seed * 9301 + 49297;
  function rnd() { s = (s * 9301 + 49297) % 233280; return s / 233280; }
  var peaks = tile.dataset.peaks.split(',').map(function (p) { return p.split(':').map(Number); });
  var base = +tile.dataset.base, W = 270, H = 72, pts = ['0,' + H];
  for (var x = 0; x <= W; x += 1.5) {
    var r = rnd();
    var h = base * (0.15 + r * r * 0.95);
    peaks.forEach(function (p) {
      var d = Math.abs(x - p[0]) / p[2];
      var q = rnd();
      if (d < 1) h = Math.max(h, p[1] * (1 - d) * q * q);
    });
    pts.push(x + ',' + (H - h).toFixed(1));
  }
  pts.push(W + ',' + H);
  var NS = 'http://www.w3.org/2000/svg';
  var svg = document.createElementNS(NS, 'svg');
  svg.setAttribute('class', 'spark');
  svg.setAttribute('viewBox', '0 0 ' + W + ' ' + H);
  svg.setAttribute('preserveAspectRatio', 'none');
  var poly = document.createElementNS(NS, 'polygon');
  poly.setAttribute('points', pts.join(' '));
  svg.appendChild(poly);
  tile.insertBefore(svg, tile.firstChild);
});

/* ---- colour scale + size histogram under each treemap ---- */
var SCALES = {
  cluster: { g: [93, 266], h: [286, 438], tops: [1001, 999, 998, 996, 994, 992, 990, 989, 987, 986, 984, 982], lab: ['0', '13.81', '27.61'] },
  esxi: { g: [563, 828], h: [850, 1024], tops: [1001, 999, 997, 995, 994, 992, 990, 989, 987, 986, 984], lab: ['0.11', '19.18', '38.25'] },
  vm: { g: [1267, 1533], h: [1554, 1728], tops: [1001, 999, 997, 995, 994, 992, 991, 989, 987, 986, 984], lab: ['0', '47.88', '95.76'] },
  ds: { g: [2205, 2472], h: [2492, 2666], tops: [1001, 999, 998, 996, 994, 992, 990, 989, 987, 986, 984], lab: ['0.035', '46.35', '92.68'] }
};
document.querySelectorAll('.scale').forEach(function (svg) {
  var c = SCALES[svg.dataset.scale], NS = 'http://www.w3.org/2000/svg';
  function add(tag, attrs, text) {
    var n = document.createElementNS(NS, tag);
    for (var k in attrs) n.setAttribute(k, attrs[k]);
    if (text) n.textContent = text;
    svg.appendChild(n);
  }
  var g0 = c.g[0], g1 = c.g[1], gm = (g0 + g1) / 2, h0 = c.h[0], h1 = c.h[1], hm = (h0 + h1) / 2;
  add('rect', { x: g0, y: 988, width: g1 - g0, height: 19, fill: 'url(#heat)' });
  add('path', { 'class': 'scale-axis', d: 'M' + g0 + ' 1012V1007.500H' + g1 + 'V1012M' + gm + ' 1007V1012' });
  var n = c.tops.length, w = (h1 - h0) / n;
  c.tops.forEach(function (t, i) {
    add('rect', { 'class': 'scale-bar', x: h0 + i * w + 0.5, y: t, width: w - 1, height: 1006 - t });
    add('rect', { 'class': 'scale-cap', x: h0 + i * w + 0.5, y: t - 1, width: w - 1, height: 2 });
  });
  add('path', { 'class': 'scale-axis', d: 'M' + h0 + ' 1012V1007.500H' + h1 + 'V1012M' + hm + ' 1007V1012' });
  add('text', { x: g0, y: 1025 }, '0');
  add('text', { x: gm, y: 1025, 'text-anchor': 'middle' }, '50');
  add('text', { x: g1, y: 1025, 'text-anchor': 'end' }, '100');
  add('text', { x: h0, y: 1025 }, c.lab[0]);
  add('text', { x: hm, y: 1025, 'text-anchor': 'middle' }, c.lab[1]);
  add('text', { x: h1, y: 1025, 'text-anchor': 'end' }, c.lab[2]);
});
```
